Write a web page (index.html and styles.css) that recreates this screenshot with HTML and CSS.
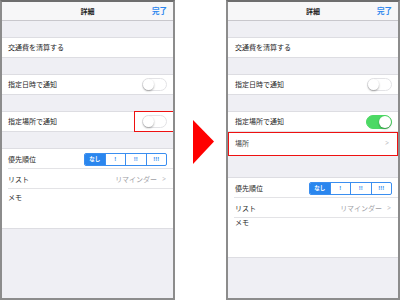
FILE: index.html
```html
<!DOCTYPE html>
<html lang="ja">
<head>
<meta charset="utf-8">
<link rel="stylesheet" href="styles.css">
</head>
<body>
<div class="stage">
  <div class="phone">
    <div class="nav"><span class="title">詳細</span><span class="done">完了</span></div>
    <div class="gap"></div>
    <div class="group">
      <div class="row"><span>交通費を清算する</span></div>
    </div>
    <div class="gap"></div>
    <div class="group">
      <div class="row"><span>指定日時で通知</span><span class="toggle"></span></div>
    </div>
    <div class="gap"></div>
    <div class="group">
      <div class="row"><span>指定場所で通知</span><span class="toggle"></span><span class="mark-toggle"></span></div>
    </div>
    <div class="gap"></div>
    <div class="group">
      <div class="row sep"><span>優先順位</span>
        <span class="seg"><span class="on">なし</span><span>!</span><span>!!</span><span>!!!</span></span>
      </div>
      <div class="row sep"><span>リスト</span><span class="detail">リマインダー<span class="chev">&gt;</span></span></div>
      <div class="row memo"><span>メモ</span></div>
    </div>
  </div>

  <div class="arrow">
    <svg width="21" height="44" viewBox="0 0 21 44"><polygon points="0,0 21,21.5 0,44" fill="#ff0000"/></svg>
  </div>

  <div class="phone right">
    <div class="nav"><span class="title">詳細</span><span class="done">完了</span></div>
    <div class="gap"></div>
    <div class="group">
      <div class="row"><span>交通費を清算する</span></div>
    </div>
    <div class="gap"></div>
    <div class="group">
      <div class="row"><span>指定日時で通知</span><span class="toggle"></span></div>
    </div>
    <div class="gap"></div>
    <div class="group">
      <div class="row"><span>指定場所で通知</span><span class="toggle is-on"></span></div>
      <div class="row place"><span>場所</span><span class="chev">&gt;</span></div>
    </div>
    <div class="gap tall"></div>
    <div class="group">
      <div class="row sep"><span>優先順位</span>
        <span class="seg"><span class="on">なし</span><span>!</span><span>!!</span><span>!!!</span></span>
      </div>
      <div class="row sep"><span>リスト</span><span class="detail">リマインダー<span class="chev">&gt;</span></span></div>
      <div class="row memo"><span>メモ</span></div>
    </div>
  </div>
</div>
</body>
</html>
```

FILE: styles.css
```css
* { box-sizing: border-box; }
html, body { margin: 0; padding: 0; background: #ffffff; }
body {
  width: 400px;
  height: 300px;
  overflow: hidden;
  font-family: "Noto Sans CJK JP", "Noto Sans", sans-serif;
  color: #222;
}
.stage {
  display: flex;
  width: 400px;
  height: 300px;
}
.phone {
  position: relative;
  width: 175px;
  height: 300px;
  border: 2px solid #8c8c8c;
  border-top-color: #6e6e6e;
  background: #efeff4;
  display: flex;
  flex-direction: column;
  overflow: hidden;
}
.phone.right { width: 174px; }
.arrow {
  width: 51px;
  padding-top: 120px;
  padding-left: 18px;
}
.arrow svg { display: block; }
.nav {
  position: relative;
  height: 19px;
  flex: none;
  background: #f7f7f8;
  border-bottom: 1px solid #c8c7cc;
  display: flex;
  align-items: center;
  justify-content: center;
  font-size: 7px;
}
.title { font-weight: 700; color: #222; }
.done {
  position: absolute;
  right: 6px;
  top: 4px;
  color: #2a86ee;
  font-weight: 700;
  font-size: 7.5px;
  line-height: 9px;
}
.gap { height: 16px; flex: none; }
.gap.tall { height: 21px; }
.group {
  background: #fff;
  border-top: 1px solid #dddde2;
  border-bottom: 1px solid #dddde2;
  flex: none;
}
.row {
  position: relative;
  height: 19px;
  padding: 0 6px;
  display: flex;
  align-items: center;
  justify-content: space-between;
  font-size: 7px;
  line-height: 9px;
  color: #1e1e1e;
}
.phone.right .row { padding: 0 6px 0 7px; }
.row.sep { height: 20px; }
.row.sep::after {
  content: "";
  position: absolute;
  left: 6px;
  right: 0;
  bottom: 0;
  border-bottom: 1px solid #e3e3e6;
}
.row.memo {
  height: 39px;
  align-items: flex-start;
  padding-top: 4px;
}
.toggle {
  position: relative;
  width: 25px;
  height: 13px;
  border-radius: 7px;
  border: 1px solid #e3e3e6;
  background: #fff;
}
.toggle::after {
  content: "";
  position: absolute;
  left: 0;
  top: 0;
  width: 11px;
  height: 11px;
  border-radius: 50%;
  background: #fff;
  box-shadow: 0 1px 2px rgba(0,0,0,0.35);
}
.toggle.is-on {
  width: 26px;
  height: 14px;
  background: #4cd964;
  border-color: #4cd964;
}
.toggle.is-on::after {
  left: auto;
  right: 0;
  width: 12px;
  height: 12px;
}
.mark-toggle {
  position: absolute;
  left: 132px;
  top: -1px;
  width: 41px;
  height: 21px;
  border: 1.5px solid #ee1111;
}
.row.place {
  height: 24px;
  border-top: 1px solid #e3e3e6;
  color: #444;
}
.row.place::after {
  content: "";
  position: absolute;
  left: 0;
  right: 0;
  top: 0;
  bottom: -1px;
  border: 1.5px solid #ee1111;
}
.seg {
  display: flex;
  width: 83px;
  height: 13px;
  border: 1px solid #3a8ef0;
  border-radius: 2px;
  overflow: hidden;
}
.seg span {
  flex: 1;
  display: flex;
  align-items: center;
  justify-content: center;
  font-family: "Liberation Sans", "Noto Sans CJK JP", sans-serif;
  font-size: 6px;
  font-weight: 700;
  color: #2a86ee;
  border-left: 1px solid #3a8ef0;
}
.seg span:first-child { border-left: none; }
.seg .on {
  background: #2a86ee;
  color: #fff;
  font-family: "Noto Sans CJK JP", sans-serif;
  font-size: 5.5px;
}
.detail {
  color: #a0a0a5;
  display: flex;
  align-items: center;
}
.chev {
  color: #b8b8bd;
  font-family: "DejaVu Sans", sans-serif;
  font-size: 7px;
  margin-left: 4px;
  transform: scaleX(0.7);
}
.row.place .chev { margin-right: 2px; }
```
